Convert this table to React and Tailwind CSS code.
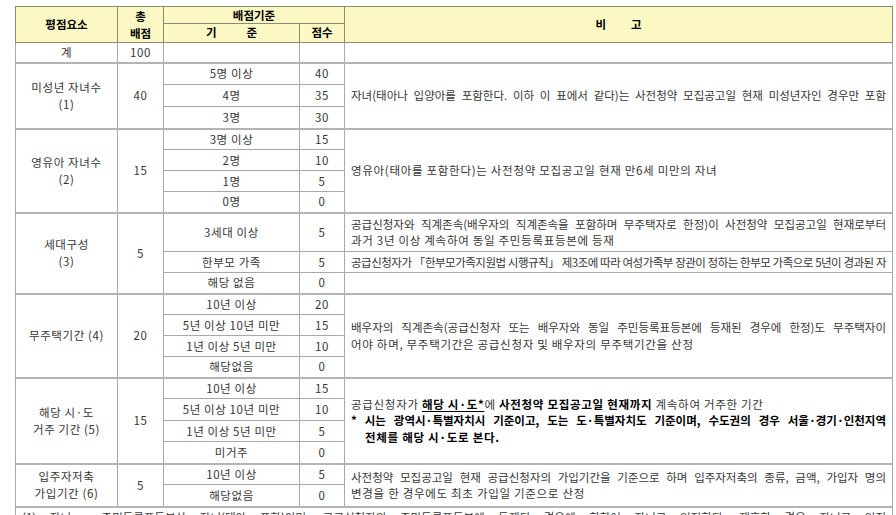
import React from "react";

const F = "font-['Noto_Sans_CJK_KR','Noto_Sans',sans-serif]";
const J = "block whitespace-nowrap tracking-normal [text-align-last:justify]";

const hd = "border border-[#8d8b72] bg-[#fbf8c3] text-black font-bold text-[11.5px] text-center p-0";
const c = "border border-[#a8a8a8] text-[#363636] text-[11.5px] tracking-[0.6px] text-center p-0 leading-[15px]";
const note = "border border-[#a8a8a8] text-[#363636] text-[11.5px] tracking-[0.7px] text-left px-[6px] py-0 leading-[16.5px]";
const gt = "border-t-2 border-t-[#b4b4b4]";

function Group({ name, total, rows, notes, h }) {
  return rows.map((r, i) => (
    <tr key={i} className={h ? h[i] : "h-[21px]"}>
      {i === 0 && (
        <td rowSpan={rows.length} className={`${c} ${gt} text-[#444] leading-[17px]`}>
          {name}
        </td>
      )}
      {i === 0 && (
        <td rowSpan={rows.length} className={`${c} ${gt}`}>
          {total}
        </td>
      )}
      <td className={`${c} ${i === 0 ? gt : ""}`}>{r[0]}</td>
      <td className={`${c} ${i === 0 ? gt : ""}`}>{r[1]}</td>
      {notes[i] !== undefined && (
        <td rowSpan={notes[i].span} className={`${note} ${i === 0 ? gt : ""}`}>
          {notes[i].content}
        </td>
      )}
    </tr>
  ));
}

export default function App() {
  return (
    <div className={`${F} bg-white w-[896px] h-[515px] overflow-hidden pt-[6px] pl-[15px]`}>
      <table className="border-collapse table-fixed w-[877px]">
        <colgroup>
          <col className="w-[102px]" />
          <col className="w-[46px]" />
          <col className="w-[136px]" />
          <col className="w-[45px]" />
          <col className="w-[548px]" />
        </colgroup>
        <tbody>
          <tr className="h-[17px]">
            <td rowSpan={2} className={`${hd}`}>평점요소</td>
            <td rowSpan={2} className={`${hd} leading-[17px]`}>
              총<br />배점
            </td>
            <td colSpan={2} className={`${hd} leading-[15px]`}>배점기준</td>
            <td rowSpan={2} className={`${hd}`}>
              비<span className="inline-block w-[25px]" />고
            </td>
          </tr>
          <tr className="h-[19px]">
            <td className={`${hd}`}>
              기<span className="inline-block w-[30px]" />준
            </td>
            <td className={`${hd}`}>점수</td>
          </tr>
          <tr className="h-[20px]">
            <td className={`${c} text-[#444]`}>계</td>
            <td className={c}>100</td>
            <td className={c}></td>
            <td className={c}></td>
            <td className={note}></td>
          </tr>
          <Group
            name={<>미성년 자녀수<br />(1)</>}
            total="40"
            h={["h-[22px]", "h-[22px]", "h-[22px]"]}
            rows={[["5명 이상", "40"], ["4명", "35"], ["3명", "30"]]}
            notes={[
              {
                span: 3,
                content: (
                  <span className={J}>
                    자녀(태아나 입양아를 포함한다. 이하 이 표에서 같다)는 사전청약 모집공고일 현재 미성년자인 경우만 포함
                  </span>
                ),
              },
            ]}
          />
          <Group
            name={<>영유아 자녀수<br />(2)</>}
            total="15"
            rows={[["3명 이상", "15"], ["2명", "10"], ["1명", "5"], ["0명", "0"]]}
            notes={[
              {
                span: 4,
                content: <>영유아(태아를 포함한다)는 사전청약 모집공고일 현재 만6세 미만의 자녀</>,
              },
            ]}
          />
          <Group
            name={<>세대구성<br />(3)</>}
            total="5"
            h={["h-[39px]", "h-[21px]", "h-[21px]"]}
            rows={[["3세대 이상", "5"], ["한부모 가족", "5"], ["해당 없음", "0"]]}
            notes={[
              {
                span: 1,
                content: (
                  <>
                    <span className={J}>
                      공급신청자와 직계존속(배우자의 직계존속을 포함하며 무주택자로 한정)이 사전청약 모집공고일 현재로부터
                    </span>
                    <span className="block">과거 3년 이상 계속하여 동일 주민등록표등본에 등재</span>
                  </>
                ),
              },
              {
                span: 1,
                content: (
                  <span className="block whitespace-nowrap tracking-[-0.5px] [text-align-last:justify]">
                    공급신청자가 「한부모가족지원법 시행규칙」 제3조에 따라 여성가족부 장관이 정하는 한부모 가족으로 5년이 경과된 자
                  </span>
                ),
              },
              { span: 1, content: null },
            ]}
          />
          <Group
            name="무주택기간 (4)"
            total="20"
            rows={[["10년 이상", "20"], ["5년 이상 10년 미만", "15"], ["1년 이상 5년 미만", "10"], ["해당없음", "0"]]}
            notes={[
              {
                span: 4,
                content: (
                  <>
                    <span className={J}>
                      배우자의 직계존속(공급신청자 또는 배우자와 동일 주민등록표등본에 등재된 경우에 한정)도 무주택자이
                    </span>
                    <span className="block">어야 하며, 무주택기간은 공급신청자 및 배우자의 무주택기간을 산정</span>
                  </>
                ),
              },
            ]}
          />
          <Group
            name={<>해당 시·도<br />거주 기간 (5)</>}
            total="15"
            h={["h-[21px]", "h-[22px]", "h-[21px]", "h-[22px]"]}
            rows={[["10년 이상", "15"], ["5년 이상 10년 미만", "10"], ["1년 이상 5년 미만", "5"], ["미거주", "0"]]}
            notes={[
              {
                span: 4,
                content: (
                  <>
                    <span className="block">
                      공급신청자가{" "}
                      <b className="text-black underline underline-offset-2">해당 시·도*</b>에{" "}
                      <b className="text-black">사전청약 모집공고일 현재까지</b> 계속하여 거주한 기간
                    </span>
                    <b className={`${J} text-black`}>
                      * 시는 광역시·특별자치시 기준이고, 도는 도·특별자치도 기준이며, 수도권의 경우 서울·경기·인천지역
                    </b>
                    <b className="block text-black pl-[14px]">전체를 해당 시·도로 본다.</b>
                  </>
                ),
              },
            ]}
          />
          <Group
            name={<>입주자저축<br />가입기간 (6)</>}
            total="5"
            h={["h-[21px]", "h-[22px]"]}
            rows={[["10년 이상", "5"], ["해당없음", "0"]]}
            notes={[
              {
                span: 2,
                content: (
                  <>
                    <span className={J}>
                      사전청약 모집공고일 현재 공급신청자의 가입기간을 기준으로 하며 입주자저축의 종류, 금액, 가입자 명의
                    </span>
                    <span className="block">변경을 한 경우에도 최초 가입일 기준으로 산정</span>
                  </>
                ),
              },
            ]}
          />
          <tr className="h-[20px]">
            <td colSpan={5} className={`${note} ${gt} align-top pt-[1px] text-[#444]`}>
              <span className={J}>
                (1) 자녀 : 주민등록표등본상 자녀(태아 포함)이며, 공급신청자의 주민등록표등본에 등재된 경우에 한하여 자녀로 인정하되, 재혼한 경우 자녀로 인정
              </span>
            </td>
          </tr>
        </tbody>
      </table>
    </div>
  );
}
